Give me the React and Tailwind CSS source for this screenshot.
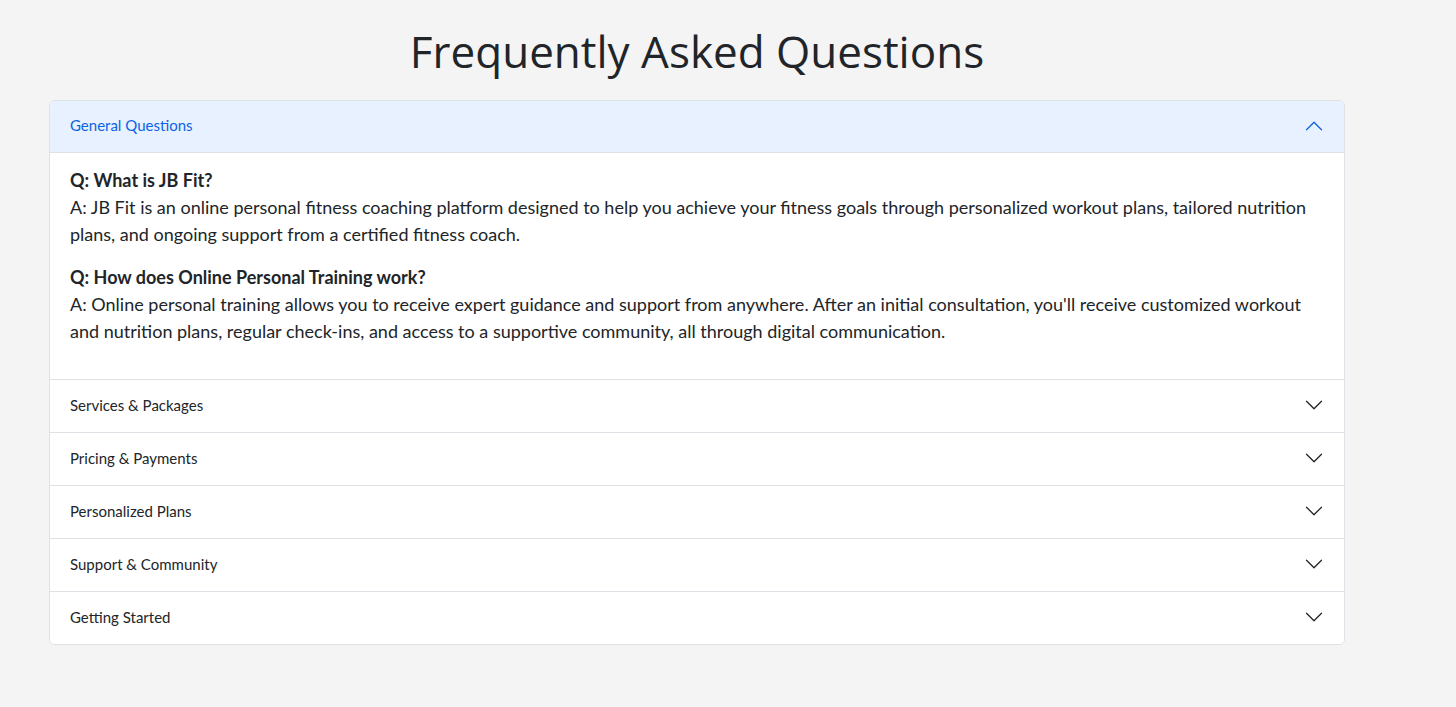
import React, { useState } from 'react';

const SECTIONS = [
    {
        id: 'general',
        title: 'General Questions',
        items: [
            {
                q: 'Q: What is JB Fit?',
                a: 'A: JB Fit is an online personal fitness coaching platform designed to help you achieve your fitness goals through personalized workout plans, tailored nutrition plans, and ongoing support from a certified fitness coach.',
            },
            {
                q: 'Q: How does Online Personal Training work?',
                a: "A: Online personal training allows you to receive expert guidance and support from anywhere. After an initial consultation, you'll receive customized workout and nutrition plans, regular check-ins, and access to a supportive community, all through digital communication.",
            },
        ],
    },
    { id: 'services', title: 'Services & Packages', items: [] },
    { id: 'pricing', title: 'Pricing & Payments', items: [] },
    { id: 'plans', title: 'Personalized Plans', items: [] },
    { id: 'support', title: 'Support & Community', items: [] },
    { id: 'start', title: 'Getting Started', items: [] },
];

const Chevron = ({ open }) => (
    <svg
        viewBox="0 0 16 16"
        className={`w-5 h-5 shrink-0 ${open ? 'rotate-180 fill-[#0c63e4]' : 'fill-[#212529]'}`}
    >
        <path d="M1.646 4.646a.5.5 0 0 1 .708 0L8 10.293l5.646-5.647a.5.5 0 0 1 .708.708l-6 6a.5.5 0 0 1-.708 0l-6-6a.5.5 0 0 1 0-.708z" />
    </svg>
);

const App = () => {
    const [openId, setOpenId] = useState('general');

    return (
        <div className="min-h-screen bg-[#f4f4f4] pt-[24px] pb-16">
            <h1 className="w-[1296px] ml-[49px] text-center text-[44px] leading-[54px] text-[#212529] font-['Open_Sans',sans-serif] mb-[22px]">
                Frequently Asked Questions
            </h1>

            <div className="w-[1296px] ml-[49px] bg-white border border-[#dee2e6] rounded-md overflow-hidden font-['Lato',sans-serif] text-[#212529]">
                {SECTIONS.map((sec, i) => {
                    const open = openId === sec.id;
                    return (
                        <div key={sec.id} className={i > 0 ? 'border-t border-[#dee2e6]' : ''}>
                            <button
                                onClick={() => setOpenId(open ? null : sec.id)}
                                className={`w-full h-[52px] px-5 pb-[2px] flex items-center justify-between text-left text-[15px] ${open
                                    ? 'bg-[#e7f1ff] text-[#0c63e4] border-b border-[#dee2e6]'
                                    : 'bg-white text-[#212529]'
                                    }`}
                            >
                                <span>{sec.title}</span>
                                <Chevron open={open} />
                            </button>
                            {open && (
                                <div className="px-5 pt-[14px] pb-[18px] text-[18px] leading-[27px]">
                                    {sec.items.map((item) => (
                                        <p key={item.q} className="mb-[16px]">
                                            <strong className="font-bold">{item.q}</strong>
                                            <br />
                                            {item.a}
                                        </p>
                                    ))}
                                </div>
                            )}
                        </div>
                    );
                })}
            </div>
        </div>
    );
};

export default App;
